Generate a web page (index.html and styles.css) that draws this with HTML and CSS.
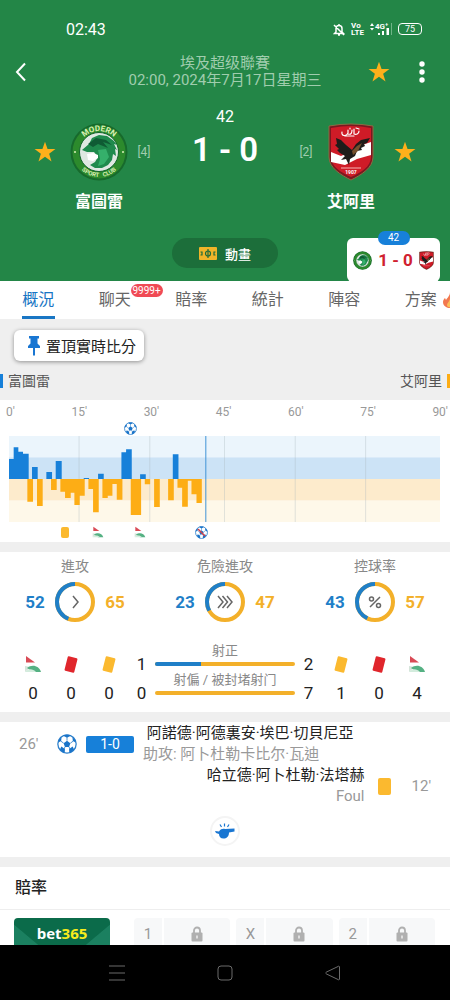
FILE: index.html
```html
<!DOCTYPE html>
<html lang="zh-Hant">
<head>
    <meta charset="UTF-8">
    <meta name="viewport" content="width=device-width, initial-scale=1.0">
    <title>富圖雷 1 - 0 艾阿里</title>
    <link rel="stylesheet" href="styles.css">
</head>
<body>
    <!-- Shared icons -->
    <svg class="defs" width="0" height="0" aria-hidden="true">
        <symbol id="star" viewBox="0 0 24 24">
            <path fill="#fdb01b" d="M12 0.8l2.8 8h8.6l-6.9 5.1 2.6 8.5L12 17.3l-7.1 5.1 2.6-8.5L0.6 8.8h8.6z"/>
        </symbol>
        <symbol id="ball" viewBox="0 0 24 24">
            <circle cx="12" cy="12" r="11" fill="#fff" stroke="#2b7fcb" stroke-width="1.5"/>
            <path fill="#1a74c9" d="M12 8l4 3-1.5 4.6h-5L8 11zM7.5 2l4.500 2.600L16.500 2 14.500 1 9.500 1zM1 10.500L5 8.500 5.500 3.500 2.500 6.500zM23 10.500L19 8.500 18.500 3.500 21.500 6.500zM3.500 18.500l1.700-3.500 4.300 3-.2 4.600L6.500 21.500zM20.500 18.500L18.800 15l-4.300 3 .2 4.600 2.800-1.100z"/>
            <path fill="none" stroke="#2b7fcb" d="M12 8V4M16 11l3.500-2.500M14.500 15.600l1 2.400M9.500 15.600l-1 2.400M8 11L4.500 8.500"/>
        </symbol>
        <symbol id="corner" viewBox="0 0 18 18">
            <path fill="#d94a55" d="M2 1l9 6.500H2z"/>
            <path fill="#d5e4da" d="M1 17v-6l6 1z"/>
            <path fill="#55b183" d="M3 13c5-4 12-2.500 14 4H9z"/>
            <path fill="#d3ecdd" d="M1 17c3-4 8-3.500 11 0z"/>
        </symbol>
        <symbol id="lock" viewBox="0 0 12 16">
            <path fill="none" stroke="#b0b0b0" stroke-width="1.800" d="M3 7V4.500a3 3 0 0 1 6 0V7"/>
            <rect x="0.500" y="6.500" width="11" height="9" rx="1" fill="#b0b0b0"/>
            <path stroke="#fff" stroke-width="1.200" d="M6 9.500v3"/>
        </symbol>
        <symbol id="crest-home" viewBox="0 0 58 58">
            <circle cx="29" cy="29" r="28.500" fill="#176a2c"/>
            <circle cx="29" cy="29" r="26.500" fill="#2c8a2c"/>
            <circle cx="29" cy="29" r="19.500" fill="#dfe8e2" stroke="#12642b"/>
            <path fill="#1f8a4d" d="M12 27l7-6 3-6 7-3 8 1 7 5 3 4-3-1 3 6-2-1 1 7-3-2-1 6-4 5-6 3-7 0-5-3 5-3 3-5-4-5-7 0z"/>
            <path fill="#0f5b34" d="M18 21l8-6 10 2 6 5-9-3 5 6-10-4-5 3z"/>
            <path fill="#35b06b" d="M28 27l8-1 3 8-5 7-6 2 2-7z"/>
            <path fill="#fff" d="M17 31l6-1 5 2 0 3-5 3-5-1z"/>
            <circle cx="5" cy="29" r="1" fill="#d8efb9"/>
            <circle cx="53" cy="29" r="1" fill="#d8efb9"/>
        </symbol>
        <symbol id="crest-away" viewBox="0 0 46 58">
            <path fill="#7b1820" stroke="#8c6b43" d="M1 3Q23-1 45 3v31c0 11-12 18-22 23C13 52 1 45 1 34z"/>
            <path fill="#cf1b27" d="M3 5Q23 1 43 5v29c0 10-11 16-20 20C14 50 3 44 3 34z"/>
            <path fill="#fff" d="M3 29l10 4 9-4 9-6 12-4v13l-14 4-12 6L3 39z"/>
            <path fill="none" stroke="#fff" stroke-width="1.200" stroke-linecap="round" d="M14 9c-1 4 4 5 6 1v-3M20 11c3 1 4-1 4-4M26 6v5c2 1 5 0 5-3M28 5l3 1M17 13h9M22 5v1"/>
            <path fill="#1e1c1a" d="M8 15l5 2 5 5 6 5 4-6 5-4 9-2-3 5-3 1 1 2-4 2 1 2-5 1-2 5-5 3-1 6-3-6-5 1 4-4-5-3-3-3 2-1-4-4 2-1z"/>
            <path fill="#76502e" d="M24 28l5-5 5-3-4 8-5 4z"/>
            <path stroke="#f5b6b6" d="M13 45h20"/>
        </symbol>
    </svg>

    <div class="screen">
        <header class="header">
            <div class="status-bar">
                <span class="clock">02:43</span>
                <div class="status-icons">
                    <svg width="12" height="13" viewBox="0 0 12 13"><path fill="none" stroke="#fff" stroke-width="1.500" d="M3 9V5.500a3 3 0 0 1 6 0V9l1.500 1.500h-9zM6 1v1M5 12h2M1 2l10 10"/></svg>
                    <span class="volte"><span>Vo</span><span>LTE</span></span>
                    <svg width="22" height="14" viewBox="0 0 22 14">
                        <path fill="#fff" d="M0 4l2-3 2 3zM0 6h4L2 8.500zM8 11h2v2H8zM12 9h2v4h-2zM16.500 6h2.500v7h-2.500z"/>
                        <text class="signal-text" x="5" y="7">4G⁺</text>
                        <path stroke="#6fb487" d="M21.500 1v12"/>
                    </svg>
                    <span class="battery">75</span>
                </div>
            </div>
            <div class="title-bar">
                <button class="icon-button back" type="button" aria-label="返回">
                    <svg width="12" height="20" viewBox="0 0 12 20"><path fill="none" stroke="#fff" stroke-width="2" d="M10 1.500L2 10l8 8.500"/></svg>
                </button>
                <div class="title">
                    <div>埃及超级聯賽</div>
                    <div>02:00, 2024年7月17日星期三</div>
                </div>
                <button class="icon-button" type="button" aria-label="收藏"><svg width="22" height="22"><use href="#star"/></svg></button>
                <button class="icon-button" type="button" aria-label="更多">
                    <svg width="6" height="24" viewBox="0 0 6 24" fill="#fff"><circle cx="3" cy="4" r="2.700"/><circle cx="3" cy="12" r="2.700"/><circle cx="3" cy="20" r="2.700"/></svg>
                </button>
            </div>
            <div class="match">
                <div class="team home">
                    <svg width="22" height="22"><use href="#star"/></svg>
                    <svg width="58" height="58" viewBox="0 0 58 58">
                        <use href="#crest-home"/>
                        <path id="arc-top" fill="none" d="M8 29a21 21 0 0 1 42 0"/>
                        <path id="arc-bottom" fill="none" d="M4 29a25 25 0 0 0 50 0"/>
                        <text class="crest-name"><textPath href="#arc-top" startOffset="50%">MODERN</textPath></text>
                        <text class="crest-club"><textPath href="#arc-bottom" startOffset="50%">SPORT &nbsp; CLUB</textPath></text>
                    </svg>
                    <span class="rank">[4]</span>
                    <h2 class="team-name">富圖雷</h2>
                </div>
                <div class="score-box">
                    <div class="minute">42</div>
                    <div class="score">1 - 0</div>
                </div>
                <div class="team away">
                    <span class="rank">[2]</span>
                    <svg width="46" height="58" viewBox="0 0 46 58">
                        <use href="#crest-away"/>
                        <text class="crest-year" x="23" y="51">1907</text>
                    </svg>
                    <svg width="22" height="22"><use href="#star"/></svg>
                    <h2 class="team-name">艾阿里</h2>
                </div>
            </div>
            <button class="animation-button" type="button">
                <svg width="18" height="13" viewBox="0 0 18 13"><rect width="18" height="13" rx="1" fill="#f0b429"/><path fill="none" stroke="#1e6b3b" stroke-width="1.200" d="M9 2v9M1.500 5h1.500v3H1.500M16.500 5H15v3h1.500"/><circle cx="9" cy="6.500" r="2.500" fill="none" stroke="#1e6b3b" stroke-width="1.200"/></svg>
                動畫
            </button>
            <div class="mini-score">
                <span class="mini-minute">42</span>
                <svg width="19" height="19"><use href="#crest-home"/></svg>
                <span>1 - 0</span>
                <svg width="15" height="19"><use href="#crest-away"/></svg>
            </div>
        </header>

        <nav class="tabs">
            <a class="tab active" href="#">概況</a>
            <a class="tab" href="#">聊天<span class="tab-badge">9999+</span></a>
            <a class="tab" href="#">賠率</a>
            <a class="tab" href="#">統計</a>
            <a class="tab" href="#">陣容</a>
            <a class="tab" href="#">方案<svg class="tab-flame" width="15" height="18" viewBox="0 0 15 18"><path fill="#f2784f" d="M8 1c1 4 6 5 6 10 0 4-3 6-6 6s-7-2-7-6c0-2 1-3 2-4l1 2C5 7 8 5 8 1z"/><path fill="#fbc05a" d="M8 8c1 3 3 3 3 6-1 3-6 3-6 0 0-2 2-3 3-6z"/></svg></a>
        </nav>

        <main class="content">
            <button class="pin-button" type="button">
                <svg width="14" height="20" viewBox="0 0 14 20"><path fill="#1976d2" d="M2 0h10v2.500h-1.500v5L13 10v2H8v7l-1 1-1-1v-7H1v-2l2.500-2.500v-5H2z"/></svg>
                置頂實時比分
            </button>
            <div class="legend">
                <span class="legend-home">富圖雷</span>
                <span class="legend-away">艾阿里</span>
            </div>

            <section class="card">
                <div class="axis">
                    <span>0'</span><span>15'</span><span>30'</span><span>45'</span><span>60'</span><span>75'</span><span>90'</span>
                </div>
                <!-- one column per minute, stoppage time included -->
                <div class="lane">
                    <svg width="13" height="13" style="grid-column: 26 / span 2"><use href="#ball"/></svg>
                </div>
                <svg class="plot" viewBox="28 108 1292 258" preserveAspectRatio="none" role="img" aria-label="進攻走勢">
                    <rect x="28" y="108" width="1292" height="64" fill="#ebf5fc"/>
                    <rect x="28" y="172" width="1292" height="65" fill="#cce3f6"/>
                    <rect x="28" y="237" width="1292" height="65" fill="#fdebcc"/>
                    <rect x="28" y="302" width="1292" height="64" fill="#fef8e9"/>
                    <path stroke="#a9b6bd" stroke-width="2" opacity="0.5" d="M238 108v258M450 108v258M674 108v258M886 108v258M1097 108v258"/>
                    <path fill="#1780d9" d="M28 237v-60h14v-35h14v13h14v6h17v76zM97 237v-36h17v36zM140 237v-21h17v21zM168 237v-54h18v54zM252 237v-3h16v3zM295 237v-16h17v16zM365 237v-80h14v-9h17v89zM421 237v-14h17v14zM519 237v-74h17v74z"/>
                    <path fill="#fdad15" d="M83 237v68h17v-68zM112 237v81h17v-81zM154 237v33h17v-33zM182 237v38h14v19h17v-16h11v37h16v-28h15v-50zM266 237v30h14v70h17v-100zM308 237v57h16v-7h14v-35h13v47h17v-62zM393 237v108h31v-108zM435 237v16h16v-16zM463 237v84h17v-84zM505 237v64h17v-64zM533 237v26h14v57h17v-78h11v41h15v26h16v-72z"/>
                    <path stroke="#3f93d6" stroke-width="3" d="M618 108v258"/>
                </svg>
                <div class="lane">
                    <span class="booking small" style="grid-column: 12 / span 2"></span>
                    <svg width="12" height="12" style="grid-column: 19 / span 2"><use href="#corner"/></svg>
                    <svg width="12" height="12" style="grid-column: 28 / span 2"><use href="#corner"/></svg>
                    <svg width="13" height="13" style="grid-column: 41 / span 2"><use href="#ball"/><path stroke="#d0404a" stroke-width="1.500" d="M3 3l7 7"/></svg>
                </div>
            </section>

            <section class="card">
                <div class="rings">
                    <div class="ring-stat">
                        <h3>進攻</h3>
                        <span class="home-value">52</span>
                        <svg class="ring" width="40" height="40" viewBox="0 0 40 40">
                            <circle cx="20" cy="20" r="18"/>
                            <path pathLength="100" stroke-dasharray="44 100" d="M20 2a18 18 0 0 0 0 36a18 18 0 0 0 0-36"/>
                            <path class="ring-icon" d="M18 14l5 6-5 6"/>
                        </svg>
                        <span class="away-value">65</span>
                    </div>
                    <div class="ring-stat">
                        <h3>危險進攻</h3>
                        <span class="home-value">23</span>
                        <svg class="ring" width="40" height="40" viewBox="0 0 40 40">
                            <circle cx="20" cy="20" r="18"/>
                            <path pathLength="100" stroke-dasharray="33 100" d="M20 2a18 18 0 0 0 0 36a18 18 0 0 0 0-36"/>
                            <path class="ring-icon" d="M13 14l5 6-5 6M17.500 14l5 6-5 6M22 14l5 6-5 6"/>
                        </svg>
                        <span class="away-value">47</span>
                    </div>
                    <div class="ring-stat">
                        <h3>控球率</h3>
                        <span class="home-value">43</span>
                        <svg class="ring" width="40" height="40" viewBox="0 0 40 40">
                            <circle cx="20" cy="20" r="18"/>
                            <path pathLength="100" stroke-dasharray="43 100" d="M20 2a18 18 0 0 0 0 36a18 18 0 0 0 0-36"/>
                            <path class="ring-icon" d="M25 15L15 25M18.500 17a2 2 0 1 1-4 0a2 2 0 1 1 4 0M25.500 23.500a2 2 0 1 1-4 0a2 2 0 1 1 4 0"/>
                        </svg>
                        <span class="away-value">57</span>
                    </div>
                </div>
                <div class="compare">
                    <div class="count"><svg width="18" height="18"><use href="#corner"/></svg><span>0</span></div>
                    <div class="count"><span class="booking red tilted"></span><span>0</span></div>
                    <div class="count"><span class="booking tilted"></span><span>0</span></div>
                    <div class="count"><span>1</span><span>0</span></div>
                    <div class="shots">
                        <div class="shots-label">射正</div>
                        <div class="bar"><div class="bar-home" style="width: 33%"></div></div>
                        <div class="shots-label">射偏 / 被封堵射门</div>
                        <div class="bar"><div class="bar-home" style="width: 0%"></div></div>
                    </div>
                    <div class="count"><span>2</span><span>7</span></div>
                    <div class="count"><span class="booking tilted"></span><span>1</span></div>
                    <div class="count"><span class="booking red tilted"></span><span>0</span></div>
                    <div class="count"><svg width="18" height="18"><use href="#corner"/></svg><span>4</span></div>
                </div>
            </section>

            <section class="card events">
                <div class="event event-home">
                    <span class="event-time">26'</span>
                    <svg width="20" height="20"><use href="#ball"/></svg>
                    <span class="event-score">1-0</span>
                    <div class="event-text">
                        <div>&nbsp;阿諾德·阿德裏安·埃巴·切貝尼亞</div>
                        <div class="event-note">助攻: 阿卜杜勒卡比尔·瓦迪</div>
                    </div>
                </div>
                <div class="event event-away">
                    <div class="event-text">
                        <div>哈立德·阿卜杜勒·法塔赫</div>
                        <div class="event-note">Foul</div>
                    </div>
                    <span class="booking"></span>
                    <span class="event-time">12'</span>
                </div>
                <div class="whistle">
                    <svg width="20" height="16" viewBox="0 0 20 16"><path fill="#1976d2" d="M0 8l4 .5C5.500 6 8 5.500 10 6l9.500-.5v3L14 9.500c0 4-2.500 6-5.500 6S4 13.500 4 11L1 10z"/><path stroke="#1976d2" stroke-width="1.200" d="M9.500 3.500V0.500M6.500 4L5 1.500M12.500 4L14 1.500"/></svg>
                </div>
            </section>

            <section class="card">
                <h2 class="odds-title">賠率</h2>
                <div class="odds">
                    <a class="bookmaker" href="#">bet<span>365</span></a>
                    <button class="odd" type="button"><span class="odd-name">1</span><svg width="12" height="16"><use href="#lock"/></svg></button>
                    <button class="odd" type="button"><span class="odd-name">X</span><svg width="12" height="16"><use href="#lock"/></svg></button>
                    <button class="odd" type="button"><span class="odd-name">2</span><svg width="12" height="16"><use href="#lock"/></svg></button>
                </div>
            </section>
        </main>

        <nav class="system-nav">
            <button type="button" aria-label="最近"><svg width="16" height="16" viewBox="0 0 16 16"><path d="M0 1h16M0 8h16M0 15h16"/></svg></button>
            <button type="button" aria-label="主頁"><svg width="16" height="16" viewBox="0 0 16 16"><rect x="1" y="1" width="14" height="14" rx="3"/></svg></button>
            <button type="button" aria-label="返回"><svg width="16" height="16" viewBox="0 0 16 16"><path d="M14.500 2v12c0 1-1 1-1.500.500L1.500 9c-1-.5-1-1.500 0-2L13 1.500c.5-.5 1.500-.5 1.500.5z"/></svg></button>
        </nav>
    </div>
</body>
</html>
```

FILE: styles.css
```css
* {
    box-sizing: border-box;
}
body {
    margin: 0;
    background-color: #000;
    color: #222;
    font-family: Roboto, "Noto Sans CJK TC", sans-serif;
    font-size: 15px;
}
h2, h3 {
    margin: 0;
    font-weight: normal;
}
a {
    color: inherit;
    text-decoration: none;
}
button {
    margin: 0;
    padding: 0;
    border: 0;
    background: none;
    color: inherit;
    font: inherit;
}
svg {
    display: block;
    flex-shrink: 0;
}
.defs {
    position: absolute;
}
.screen {
    display: flex;
    flex-direction: column;
    height: 100vh;
}

/* Header */
.header {
    position: relative;
    flex-shrink: 0;
    padding: 20px 0 13px;
    background-color: #238647;
    color: #fff;
}
.status-bar {
    display: flex;
    justify-content: space-between;
    align-items: center;
    height: 18px;
    padding: 0 28px 0 66px;
}
.clock {
    font-size: 16px;
}
.status-icons {
    display: flex;
    align-items: center;
    gap: 6px;
}
.volte {
    display: flex;
    flex-direction: column;
    font-size: 8px;
    font-weight: bold;
    line-height: 7px;
}
.signal-text {
    fill: #fff;
    font-size: 8px;
    font-weight: bold;
}
.battery {
    width: 24px;
    border: 1px solid #fff;
    border-radius: 4px;
    font-size: 9px;
    line-height: 10px;
    text-align: center;
}
.title-bar {
    display: grid;
    grid-template-columns: 86px 1fr 43px 43px;
    align-items: center;
    margin-top: 17px;
    padding: 0 7px;
}
.icon-button {
    display: flex;
    justify-content: center;
}
.back {
    justify-content: flex-start;
    padding-left: 8px;
}
.title {
    color: #a0cdae;
    line-height: 17px;
    text-align: center;
    white-space: nowrap;
}
.match {
    display: flex;
    justify-content: space-between;
    margin-top: 20px;
    padding: 0 23px;
}
.team {
    display: grid;
    gap: 9px 3px;
    align-items: center;
    justify-items: center;
    padding-top: 14px;
}
.home {
    grid-template-columns: 44px 58px 26px;
}
.away {
    grid-template-columns: 26px 58px 44px;
}
.rank {
    color: #a0cdae;
    font-size: 12px;
}
.team-name {
    grid-column: 2;
    font-size: 16px;
    font-weight: bold;
    line-height: 24px;
    white-space: nowrap;
}
.crest-name, .crest-club {
    fill: #d9f0b4;
    font-size: 8px;
    font-weight: bold;
    text-anchor: middle;
}
.crest-club {
    font-size: 6px;
}
.crest-year {
    fill: #fff;
    font-size: 5px;
    font-weight: bold;
    text-anchor: middle;
}
.score-box {
    text-align: center;
}
.minute {
    font-size: 16px;
    line-height: 16px;
}
.score {
    margin-top: 5px;
    font-size: 33px;
    font-weight: 600;
    line-height: 40px;
}
.animation-button {
    display: flex;
    align-items: center;
    justify-content: center;
    gap: 8px;
    width: 106px;
    height: 30px;
    margin: 24px auto 0;
    border-radius: 15px;
    background-color: #1c6e3a;
    font-size: 13px;
    font-weight: 500;
}
.mini-score {
    position: absolute;
    right: 10px;
    bottom: -1px;
    z-index: 1;
    display: flex;
    align-items: center;
    justify-content: center;
    gap: 6px;
    width: 93px;
    height: 44px;
    border-radius: 6px;
    background-color: #fff;
    color: #d0212f;
    font-size: 17px;
    font-weight: bold;
}
.mini-minute {
    position: absolute;
    top: -7px;
    left: 50%;
    width: 32px;
    margin-left: -16px;
    border-radius: 7px;
    background-color: #1780d9;
    color: #fff;
    font-size: 10px;
    font-weight: normal;
    line-height: 14px;
    text-align: center;
}

/* Tabs */
.tabs {
    display: flex;
    flex-shrink: 0;
    overflow: hidden;
    background-color: #fff;
    color: #666;
    font-size: 16px;
}
.tab {
    display: flex;
    flex: 0 0 17%;
    justify-content: center;
    position: relative;
    line-height: 38px;
}
.active {
    color: #1976c4;
}
.active::after {
    content: "";
    position: absolute;
    bottom: 0;
    width: 33px;
    height: 3px;
    background-color: #1976c4;
}
.tab-badge {
    position: absolute;
    top: 3px;
    left: 54px;
    width: 32px;
    border-radius: 7px;
    background-color: #f04a55;
    color: #fff;
    font-size: 10px;
    line-height: 13px;
    text-align: center;
}
.tab-flame {
    position: absolute;
    top: 10px;
    left: 59px;
}

/* Content */
.content {
    flex: 1;
    min-height: 0;
    overflow: hidden;
    background-color: #efefef;
}
.card {
    margin-bottom: 10px;
    background-color: #fff;
}
.pin-button {
    display: flex;
    align-items: center;
    gap: 5px;
    height: 31px;
    margin: 11px 14px 0;
    padding: 0 8px 0 13px;
    border-radius: 6px;
    background-color: #fff;
    box-shadow: 0 1px 4px rgba(0, 0, 0, 0.4);
    white-space: nowrap;
}
.legend {
    display: flex;
    justify-content: space-between;
    margin: 13px 0 12px;
    color: #555;
    font-size: 14px;
    line-height: 14px;
}
.legend-home {
    padding-left: 5px;
    border-left: 3px solid #1780d9;
}
.legend-away {
    padding-right: 5px;
    border-right: 3px solid #fdad15;
}

/* Chart */
.axis {
    display: flex;
    justify-content: space-between;
    padding: 4px 2px 0 6px;
    color: #999;
    font-size: 12px;
    line-height: 16px;
}
.lane {
    display: grid;
    grid-template-columns: repeat(92, minmax(0, 1fr));
    grid-template-rows: 16px;
    align-items: center;
    justify-items: center;
    margin: 0 10px 0 9px;
}
.lane:last-child {
    grid-template-rows: 20px;
}
.plot {
    width: calc(100% - 19px);
    height: 86px;
    margin: 0 10px 0 9px;
}
.booking {
    width: 13px;
    height: 17px;
    border-radius: 2px;
    background-color: #fbb92f;
}
.small {
    width: 8px;
    height: 11px;
}
.tilted {
    width: 10px;
    height: 15px;
    border-radius: 1px;
    transform: rotate(14deg);
}
.red {
    background-color: #e0262c;
}

/* Stats */
.rings {
    display: grid;
    grid-template-columns: repeat(3, 1fr);
    padding-top: 4px;
}
.ring-stat {
    display: grid;
    grid-template-columns: 20px 40px 20px;
    gap: 6px 10px;
    align-items: center;
    justify-content: center;
    justify-items: center;
    font-size: 17px;
    font-weight: bold;
}
.ring-stat h3 {
    grid-column: 1 / -1;
    color: #888;
    font-size: 14px;
    line-height: 20px;
}
.ring {
    fill: none;
    stroke: #1f7fc8;
    stroke-width: 4px;
}
.ring circle {
    stroke: #f3b02a;
}
.ring .ring-icon {
    stroke: #666;
    stroke-width: 1.5px;
}
.home-value {
    color: #1f7fc8;
}
.away-value {
    color: #f3b02a;
}
.compare {
    display: grid;
    grid-template-columns: repeat(3, 38px) 27px 1fr 27px repeat(3, 38px);
    align-items: end;
    padding: 18px 14px 9px;
}
.count {
    display: grid;
    grid-template-rows: 20px 20px;
    gap: 9px;
    align-items: center;
    justify-items: center;
    font-size: 17px;
}
.shots {
    padding-bottom: 8px;
}
.shots-label {
    color: #888;
    font-size: 13px;
    line-height: 22px;
    text-align: center;
    white-space: nowrap;
}
.bar {
    height: 4px;
    margin-bottom: 3px;
    border-radius: 2px;
    background-color: #f3b02a;
    overflow: hidden;
}
.bar:last-child {
    margin-bottom: 0;
}
.bar-home {
    height: 100%;
    background-color: #1f7fc8;
}

/* Events */
.events {
    padding: 1px 0 11px;
}
.event {
    display: flex;
    align-items: center;
    line-height: 21px;
    white-space: nowrap;
}
.event-home {
    gap: 9px;
    padding-left: 19px;
}
.event-home .event-time {
    width: 29px;
}
.event-away {
    justify-content: flex-end;
    gap: 13px;
    padding-right: 19px;
    text-align: right;
}
.event-away .event-time {
    padding-left: 8px;
}
.event-time, .event-note {
    color: #999;
}
.event-score {
    width: 48px;
    border-radius: 2px;
    background-color: #1780d9;
    color: #fff;
    font-size: 14px;
    line-height: 17px;
    text-align: center;
}
.whistle {
    display: flex;
    align-items: center;
    justify-content: center;
    width: 30px;
    height: 30px;
    margin: 9px auto 0;
    border-radius: 50%;
    border: 2px solid #f4f4f4;
}

/* Odds */
.odds-title {
    padding: 0 15px;
    border-bottom: 1px solid #eee;
    font-size: 16px;
    font-weight: 500;
    line-height: 42px;
}
.odds {
    display: grid;
    grid-template-columns: 114px repeat(3, 1fr);
    gap: 6px;
    padding: 8px 15px 9px 14px;
}
.bookmaker {
    margin-right: 18px;
    border-radius: 4px;
    background:
        linear-gradient(40deg, #1b8060 22%, transparent 23%),
        linear-gradient(-40deg, #1b8060 22%, transparent 23%),
        #0b6b4a;
    color: #fff;
    font-family: "Open Sans", sans-serif;
    font-weight: bold;
    line-height: 30px;
    text-align: center;
}
.bookmaker span {
    color: #f8ec1c;
}
.odd {
    display: grid;
    grid-template-columns: 30px 1fr;
    align-items: center;
    justify-items: center;
    height: 32px;
    border-radius: 4px;
    background-color: #f7f8f9;
    color: #999;
}
.odd-name {
    width: 100%;
    border-right: 2px solid #fff;
    line-height: 32px;
}

/* System navigation */
.system-nav {
    display: flex;
    flex-shrink: 0;
    justify-content: space-around;
    align-items: center;
    height: 55px;
    padding: 0 63px;
    background-color: #000;
}
.system-nav svg {
    fill: none;
    stroke: #6b6b6b;
}
```
